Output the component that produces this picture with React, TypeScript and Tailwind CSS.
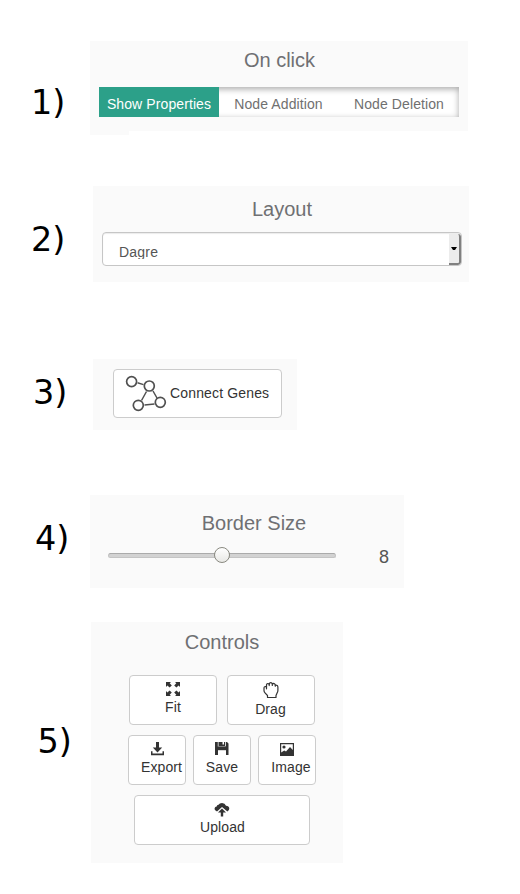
import React from "react";

type RowProps = {
  label: string;
  className: string;
  labelClass: string;
  children: React.ReactNode;
};

function Row({ label, className, labelClass, children }: RowProps) {
  return (
    <section className={`flex items-start ${className}`}>
      <div
        className={`shrink-0 whitespace-nowrap font-['DejaVu_Sans',sans-serif] text-[33.5px] leading-9 text-black ${labelClass}`}
      >
        {label}
      </div>
      {children}
    </section>
  );
}

function Title({ children, className }: { children: React.ReactNode; className: string }) {
  return (
    <h2 className={`text-center text-xl leading-6 font-normal text-[#6f7073] ${className}`}>
      {children}
    </h2>
  );
}

type ToolProps = { label: string; className: string; textClass?: string; icon: React.ReactNode };

function Tool({ label, className, textClass = "", icon }: ToolProps) {
  return (
    <button
      className={`flex h-[50px] flex-col items-center rounded border border-[#ccc] bg-white pt-[5px] text-sm leading-5 tracking-[0.1px] text-[#333] ${className}`}
    >
      {icon}
      <span className={textClass}>{label}</span>
    </button>
  );
}

const FitIcon = () => (
  <svg className="h-4 w-4 shrink-0" viewBox="0 0 16 16" fill="#333">
    <path d="M1 1h5L4.700 2.300 6.800 4.400 4.600 6.600 2.400 4.400 1 6zM15 1v5l-1.400-1.600-2.200 2.200-2.200-2.200 2.100-2.100L10 1zM1 15v-5l1.400 1.600 2.200-2.200 2.200 2.200-2.100 2.100L6 15zM15 15h-5l1.300-1.300-2.100-2.100 2.200-2.200 2.200 2.200L15 10z" />
  </svg>
);

const HandIcon = () => (
  <svg className="h-[19px] w-4 shrink-0" viewBox="0 0 16 19" fill="none" stroke="#333" strokeWidth="1.2" strokeLinejoin="round" strokeLinecap="round">
    <path d="M4.500 16.500V14.500L2 11.800Q1 10.800 1 9.500V6.800Q1.100 5.600 2.400 5.500L3.500 5.800V3.800Q3.600 2.600 4.800 2.500Q5.800 2.500 6.200 3.200Q6.500 1.600 7.800 1.600Q9 1.600 9.300 2.900Q9.800 2.400 10.700 2.400Q12 2.500 12.300 4.200Q14.900 3.800 14.900 6.200V9.500Q14.900 11 14 12.200L13 14.500V16.500Z" />
    <path d="M3.500 5.800V7.800M6.200 3.200V4.600M9.300 2.900V4.400M12.300 4.200V5.200" />
  </svg>
);

const ExportIcon = () => (
  <svg className="h-4 w-4 shrink-0" viewBox="0 0 16 16" fill="#333">
    <path d="M7 1h3v5.500h3.200L8.500 11.500 3.800 6.500H7zM2 10.200h1.500V12.500h10v-2.300H15v4H2z" />
  </svg>
);

const SaveIcon = () => (
  <svg className="h-4 w-4 shrink-0" viewBox="0 0 16 16" fill="#333">
    <path fillRule="evenodd" d="M1 1h2.800v4.800h8V1H13l1.500 1.500V14H12V9H4v5H1zM4.500 1H11v4H4.500zM8.500 1v2.500H10V1z" />
    <path d="M3.500 5.500h9v3.700h-9z" />
  </svg>
);

const ImageIcon = () => (
  <svg className="h-4 w-4 shrink-0" viewBox="0 0 16 16" fill="#333">
    <path fillRule="evenodd" d="M1 2h14v13H1zM2.200 3.200v8.300L5.200 9.500 7 10.500 11 6l2.800 3V3.200z" />
    <circle cx="5" cy="6" r="1.600" />
  </svg>
);

const UploadIcon = () => (
  <svg className="h-4 w-4 shrink-0" viewBox="0 0 16 16" fill="#333">
    <path d="M3 10.500L.9 8.900Q.1 7.500 1.100 6.300Q1.700 5.500 2.700 5.500Q2.800 3.700 4.500 3.700Q5.500 2 8 2Q11 2 12 4.700Q15 4.700 15.300 7.200Q15.500 9.100 13.400 10.500L8 5.900z" />
    <path d="M8 7.500l4 4H9.200v4H6.800v-4H4z" />
  </svg>
);

function GraphIcon() {
  return (
    <svg className="h-9 w-[42px] shrink-0 overflow-visible" viewBox="0 0 42 36" fill="none" stroke="#505050">
      <path strokeWidth="1.500" d="M11.500 6.800l6 1.800M20.500 15.500l-5 9M27 15l4 7M18.500 29l10-1" />
      <g strokeWidth="1.700">
        <circle cx="5.600" cy="5.600" r="5" />
        <circle cx="23.300" cy="10" r="5" />
        <circle cx="12.300" cy="29.300" r="5" />
        <circle cx="34.300" cy="26.300" r="5" />
      </g>
    </svg>
  );
}

export default function App() {
  return (
    <main className="flex h-[894px] w-[520px] flex-col overflow-hidden bg-white font-['Liberation_Sans',Arial,sans-serif]">
      <Row label="1)" className="h-[186px] pt-[41px]" labelClass="w-[90px] pl-[31px] pt-[44px]">
        <div>
          <div className="h-[90px] w-[378px] bg-[#fafafa]">
            <Title className="pt-[7px] pl-px">On click</Title>
            <div className="mt-[15px] ml-[9px] flex h-[30px] w-[360px] bg-white text-center text-sm leading-[34px] tracking-[0.1px] whitespace-nowrap text-[#707070] shadow-[inset_0_2px_6px_rgba(0,0,0,0.35)]">
              <div className="w-[120px] bg-[#2ca089] text-white">Show Properties</div>
              <div className="w-[120px] pr-px">Node Addition</div>
              <div className="w-[120px]">Node Deletion</div>
            </div>
          </div>
          <div className="h-1 w-[39px] bg-[#fafafa]" />
        </div>
      </Row>

      <Row label="2)" className="h-[173px]" labelClass="w-[93px] pl-[31px] pt-[36px]">
        <div className="h-[96px] w-[376px] bg-[#fafafa]">
          <Title className="pt-[11px] pl-0.5">Layout</Title>
          <div className="mt-[11px] ml-[9px] flex h-[34px] w-[360px] justify-between overflow-hidden rounded border border-[#c6c6c6] bg-white shadow-[inset_0_1px_1px_rgba(0,0,0,0.08)]">
            <span className="h-[26px] overflow-hidden pt-[9px] pl-4 text-sm leading-5 tracking-[0.2px] text-[#555]">Dagre</span>
            <span className="mt-px flex h-[31px] w-3 items-center justify-center rounded-r-[3px] border-r-2 border-b-2 border-[#808080] bg-[#ececec]">
              <svg className="h-[3px] w-[6px]" viewBox="0 0 6 3"><path d="M0 0h6L4 3H2z" /></svg>
            </span>
          </div>
        </div>
      </Row>

      <Row label="3)" className="h-[136px]" labelClass="w-[93px] pl-[33px] pt-[16px]">
        <div className="h-[71px] w-[204px] bg-[#fafafa] pt-[10px] pl-5">
          <button className="flex h-[49px] w-[169px] items-center rounded border border-[#ccc] bg-white pl-3 text-sm tracking-[0.15px] whitespace-nowrap text-[#333]">
            <GraphIcon />
            <span className="-mt-0.5 pl-0.5">Connect Genes</span>
          </button>
        </div>
      </Row>

      <Row label="4)" className="h-[127px]" labelClass="w-[90px] pl-[35px] pt-[26px]">
        <div className="h-[93px] w-[314px] bg-[#fafafa]">
          <Title className="pt-4 pl-[14px]">Border Size</Title>
          <div className="mt-[10px] flex h-5 items-center pl-[18px]">
            <div className="flex h-[5px] w-[228px] items-center rounded-full border border-[#c4c4c4] border-t-[#aaa] bg-[#d2d2d2] pl-[105px]">
              <div className="h-4 w-4 shrink-0 rounded-full border border-[#898980] bg-linear-to-b from-white to-[#e8e8e5]" />
            </div>
            <span className="ml-[43px] pt-[3px] text-lg leading-5 text-[#555]">8</span>
          </div>
        </div>
      </Row>

      <Row label="5)" className="h-[272px]" labelClass="w-[91px] pl-[37.5px] pt-[102px]">
        <div className="h-[241px] w-[252px] bg-[#fafafa]">
          <Title className="pt-2 pl-[10px]">Controls</Title>
          <div className="mt-[21px] ml-[38px] flex gap-[10px]">
            <Tool label="Fit" className="w-[88px]" icon={<FitIcon />} />
            <Tool label="Drag" className="w-[88px]" textClass="-mt-px pr-px" icon={<HandIcon />} />
          </div>
          <div className="mt-[10px] ml-[37px] flex gap-[7px]">
            <Tool label="Export" className="w-[58px]" textClass="pl-[9px]" icon={<ExportIcon />} />
            <Tool label="Save" className="w-[58px]" icon={<SaveIcon />} />
            <Tool label="Image" className="w-[58px]" textClass="pl-2" icon={<ImageIcon />} />
          </div>
          <div className="mt-[10px] ml-[43px] flex">
            <Tool label="Upload" className="w-[176px]" textClass="pl-px" icon={<UploadIcon />} />
          </div>
        </div>
      </Row>
    </main>
  );
}
